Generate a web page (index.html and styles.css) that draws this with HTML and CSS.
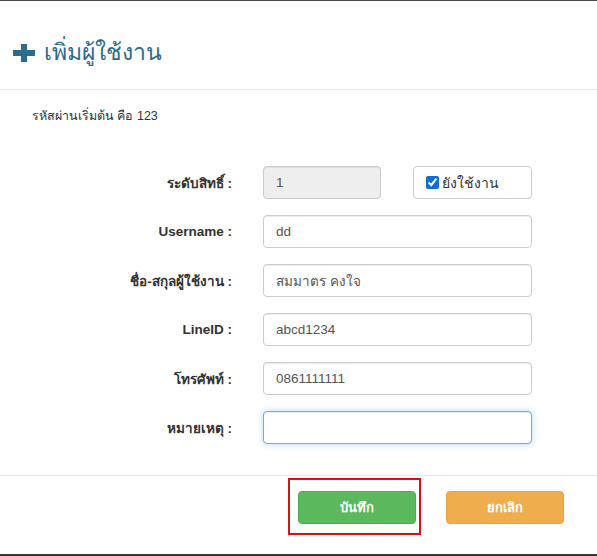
FILE: index.html
```html
<!DOCTYPE html>
<html lang="th">
<head>
<meta charset="utf-8">
<link rel="stylesheet" href="styles.css">
</head>
<body>
<div class="modal">
  <div class="modal-header">
    <h3 class="title">
      <svg class="plus" width="22" height="18" viewBox="0 0 22 18"><path d="M8 0h6v6h8v6h-8v6H8v-6H0V6h8z" fill="#2e6a8c"/></svg>
      <span>เพิ่มผู้ใช้งาน</span>
    </h3>
  </div>
  <div class="modal-body">
    <p class="note">รหัสผ่านเริ่มต้น คือ 123</p>
    <div class="form">
      <div class="row">
        <label class="lbl">ระดับสิทธิ์ :</label>
        <div class="ctl split">
          <input class="inp short" value="1" disabled>
          <div class="chkbox"><input type="checkbox" checked><span>ยังใช้งาน</span></div>
        </div>
      </div>
      <div class="row">
        <label class="lbl">Username :</label>
        <div class="ctl"><input class="inp" value="dd"></div>
      </div>
      <div class="row">
        <label class="lbl">ชื่อ-สกุลผู้ใช้งาน :</label>
        <div class="ctl"><input class="inp" value="สมมาตร คงใจ"></div>
      </div>
      <div class="row">
        <label class="lbl">LineID :</label>
        <div class="ctl"><input class="inp" value="abcd1234"></div>
      </div>
      <div class="row">
        <label class="lbl">โทรศัพท์ :</label>
        <div class="ctl"><input class="inp" value="0861111111"></div>
      </div>
      <div class="row">
        <label class="lbl">หมายเหตุ :</label>
        <div class="ctl"><input class="inp focus" value=""></div>
      </div>
    </div>
  </div>
  <div class="modal-footer">
    <div class="highlight"><button class="btn save">บันทึก</button></div>
    <button class="btn cancel">ยกเลิก</button>
  </div>
</div>
</body>
</html>
```
FILE: styles.css
```css
* { box-sizing: border-box; }
html, body { margin: 0; padding: 0; background: #fff; }
body { font-family: Tahoma, "Liberation Sans", "DejaVu Sans", sans-serif; color: #333; font-size: 13px; }
.modal {
  width: 597px; height: 556px;
  border-top: 1px solid #4a4a4a;
  border-bottom: 2px solid #3a3a3a;
  display: flex; flex-direction: column;
  position: relative;
  overflow: hidden;
}
.modal-header {
  height: 89px;
  border-bottom: 1px solid #e5e5e5;
  display: flex; align-items: center;
  padding: 0 0 0 13px;
}
.title {
  margin: 0; display: flex; align-items: center; gap: 9px;
  font-size: 23px; font-weight: normal; color: #2e6a8c;
  padding-top: 14px;
}
.plus { display: block; margin-top: 2px; }
.modal-body { flex: 1; padding: 0 0 0 32px; }
.note { margin: 17px 0 0; height: 18px; line-height: 18px; font-size: 12.5px; color: #333; }
.form { margin-top: 41px; display: flex; flex-direction: column; gap: 16px; }
.row { display: flex; align-items: center; height: 33px; }
.lbl { width: 200px; text-align: right; font-weight: bold; font-size: 13.5px; color: #333; margin-right: 31px; }
.ctl { width: 269px; height: 33px; }
.ctl.split { display: flex; justify-content: space-between; }
.inp {
  width: 100%; height: 33px;
  border: 1px solid #ccc; border-radius: 4px;
  padding: 0 12px;
  font-family: inherit; font-size: 13.5px; color: #555;
  background: #fff;
  box-shadow: inset 0 1px 1px rgba(0,0,0,.075);
  outline: none;
}
.inp.short { width: 118px; background: #eee; color: #555; }
.inp.focus { border-color: #66afe9; box-shadow: inset 0 1px 1px rgba(0,0,0,.075), 0 0 6px rgba(102,175,233,.5); }
.chkbox {
  width: 119px; height: 33px;
  border: 1px solid #ccc; border-radius: 4px;
  display: flex; align-items: center; gap: 3px;
  padding-left: 12px;
  font-family: "Liberation Serif", "DejaVu Serif", serif; font-size: 14px; color: #333;
}
.chkbox input { margin: 0; width: 13px; height: 13px; accent-color: #0b6fd6; }
.modal-footer {
  height: 79px;
  border-top: 1px solid #e5e5e5;
  display: flex; align-items: flex-start;
  padding: 2px 0 0 288px;
}
.highlight {
  border: 2px solid #d2111b;
  width: 133px; height: 57px;
  padding: 11px 0 0 8px;
}
.btn {
  height: 33px; border: 1px solid transparent; border-radius: 4px;
  color: #fff; font-family: inherit; font-weight: bold; font-size: 13px;
}
.save { width: 118px; background: #5cb85c; border-color: #4cae4c; }
.cancel { width: 118px; background: #f0ad4e; border-color: #eea236; margin-left: 25px; margin-top: 13px; }
```
